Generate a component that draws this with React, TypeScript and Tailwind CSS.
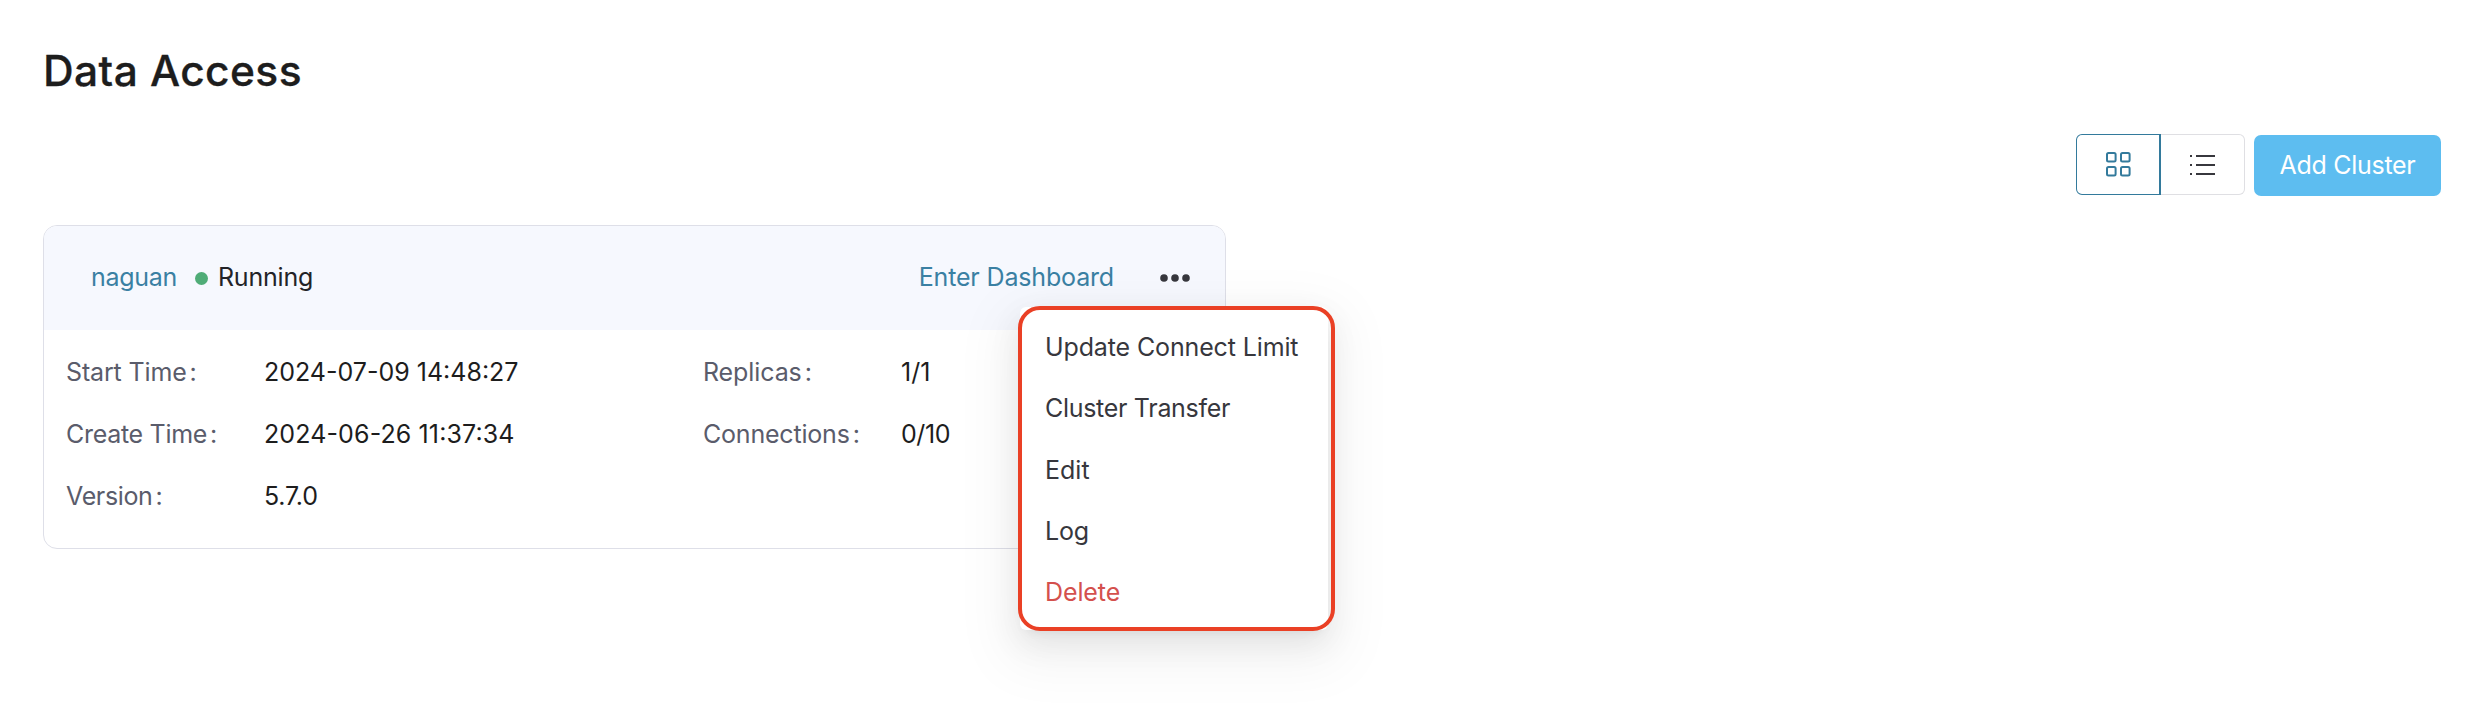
type Field = { label: string; value: string; labelClass: string; valueClass: string };

const leftFields: Field[] = [
  { label: "Start Time", value: "2024-07-09 14:48:27", labelClass: "tracking-[-0.15px]", valueClass: "" },
  { label: "Create Time", value: "2024-06-26 11:37:34", labelClass: "tracking-[-0.3px]", valueClass: "tracking-[0.12px] [font-feature-settings:'calt'_1]" },
  { label: "Version", value: "5.7.0", labelClass: "tracking-[-0.35px]", valueClass: "tracking-[-0.2px]" },
];

const rightFields: Field[] = [
  { label: "Replicas", value: "1/1", labelClass: "tracking-[-0.1px]", valueClass: "" },
  { label: "Connections", value: "0/10", labelClass: "tracking-[-0.2px]", valueClass: "tracking-[-0.4px] [font-feature-settings:'calt'_1]" },
];

const menuItems = [
  { text: "Update Connect Limit", className: "text-[#37373d] tracking-[-0.13px]" },
  { text: "Cluster Transfer", className: "text-[#37373d] tracking-[-0.3px]" },
  { text: "Edit", className: "text-[#37373d]" },
  { text: "Log", className: "text-[#37373d] tracking-[-0.2px]" },
  { text: "Delete", className: "text-[#d4504d] tracking-[-0.1px]" },
];

function GridIcon() {
  return (
    <svg width="26" height="26" viewBox="0 0 26 26" fill="none" stroke="#337a9c" strokeWidth="2">
      <rect x="1" y="1" width="8.6" height="8.6" rx="1.5" />
      <rect x="15" y="1" width="8.6" height="8.6" rx="1.5" />
      <rect x="1" y="15" width="8.6" height="8.6" rx="1.5" />
      <rect x="15" y="15" width="8.6" height="8.6" rx="1.5" />
    </svg>
  );
}

function ListIcon() {
  return (
    <svg width="26" height="24" viewBox="0 0 26 24" stroke="#37373d" strokeWidth="2">
      <path d="M0 3h2M6 3h19M0 12h2M6 12h19M0 21h2M6 21h19" />
    </svg>
  );
}

function Fields({ items, className }: { items: Field[]; className: string }) {
  return (
    <dl className={className}>
      {items.map((f) => (
        <div key={f.label} className="flex h-[62px] items-center leading-[62px]">
          <dt className="flex w-[198px] text-[#5a5c6b]">
            <span className={f.labelClass}>{f.label}</span>
            <span className="ml-[3px]">:</span>
          </dt>
          <dd className={"whitespace-nowrap text-[#1d1d1d] " + f.valueClass}>{f.value}</dd>
        </div>
      ))}
    </dl>
  );
}

export default function App() {
  return (
    <main className="h-[718px] w-full overflow-hidden bg-white pl-[43px] font-['Inter','Liberation_Sans',sans-serif] text-[25px]">
      <h1 className="pt-[41px] text-[42.5px] leading-[60px] font-medium tracking-[0.4px] text-[#1d1d1d] [-webkit-text-stroke:0.3px_#1d1d1d]">
        Data Access
      </h1>

      <div className="mt-[33px] flex h-[62px] justify-end pr-[31px]">
        <div className="flex h-[61px]">
          <button className="flex w-[85px] items-center rounded-l-[6px] border border-r-2 border-[#337a9c] pl-[29px]">
            <GridIcon />
          </button>
          <button className="flex w-[84px] items-center rounded-r-[6px] border border-l-0 border-[#dfdfe3] pl-[29px]">
            <ListIcon />
          </button>
        </div>
        <button className="mt-px ml-[9px] h-[61px] w-[187px] rounded-[7px] bg-[#5dbdf0] leading-[61px] tracking-[-0.3px] text-white">
          <span className="-mt-px block">Add Cluster</span>
        </button>
      </div>

      <section className="relative mt-[29px] h-[324px] w-[1183px] rounded-[14px] border border-[#dedfe8]">
        <header className="flex h-[104px] items-center rounded-t-[13px] bg-[#f6f8fe] pl-[47px]">
          <a className="tracking-[-0.3px] text-[#3a80a3]">naguan</a>
          <span className="ml-[18px] size-[13px] rounded-full bg-[#4fac77]" />
          <span className="ml-[10px] tracking-[-0.2px] text-[#232328]">Running</span>
          <a className="mr-[46px] ml-auto tracking-[-0.16px] text-[#3a80a3]">Enter Dashboard</a>
          <button className="mr-[35px]">
            <svg width="30" height="8" viewBox="0 0 30 8" fill="#37373d" className="-mt-px">
              <circle cx="4" cy="4" r="3.8" />
              <circle cx="15" cy="4" r="3.8" />
              <circle cx="26" cy="4" r="3.8" />
            </svg>
          </button>
        </header>
        <div className="flex pt-[11px]">
          <Fields items={leftFields} className="ml-[22px] w-[637px]" />
          <Fields items={rightFields} className="" />
        </div>

        <div className="absolute top-[81px] left-[976px] h-[323px] w-[308px] rounded-[6px] bg-white shadow-[0_12px_32px_0_rgba(0,0,0,0.08),0_6px_12px_-8px_rgba(0,0,0,0.12),0_18px_56px_16px_rgba(0,0,0,0.05)]" />
        <ul className="absolute top-[80px] left-[974px] h-[325px] w-[317px] rounded-[22px] border-4 border-[#ea4025] pt-[7px] pl-[23px]">
          {menuItems.map((m) => (
            <li key={m.text} className={"h-[61.3px] leading-[61.3px] whitespace-nowrap " + m.className}>
              {m.text}
            </li>
          ))}
        </ul>
      </section>
    </main>
  );
}
